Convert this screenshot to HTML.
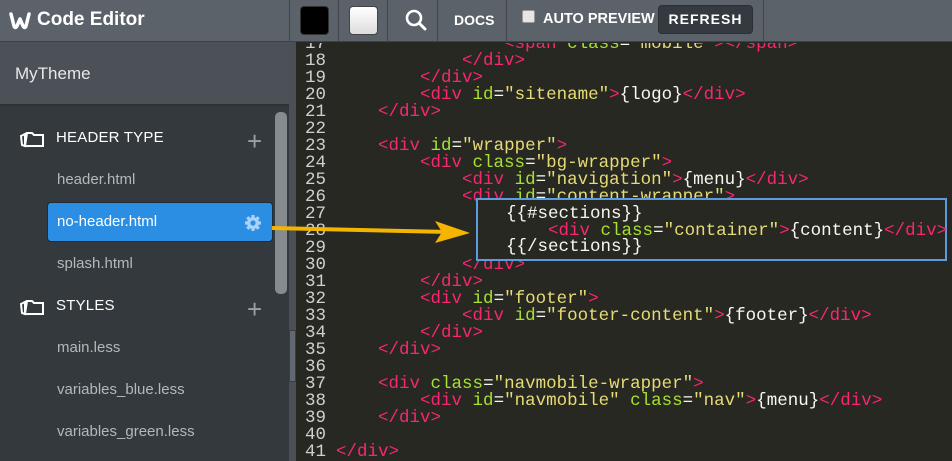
<!DOCTYPE html>
<html><head><meta charset="utf-8"><style>
*{margin:0;padding:0;box-sizing:border-box}
body{width:952px;height:461px;overflow:hidden;position:relative;background:#272822;font-family:"Liberation Sans",sans-serif}
.a{position:absolute}
#top{left:0;top:0;width:952px;height:42px;background:#5b6269;border-bottom:1px solid #3c4247}
.sep{position:absolute;top:0;width:1px;height:42px;background:#40464b}
#side{left:0;top:42px;width:290px;height:419px;background:#33393d}
#theme{left:0;top:42px;width:290px;height:64px;background:#4b5157;border-bottom:2px solid #2c3135;color:#e6e8ea;font-size:17px;padding:22px 0 0 15px}
.sec{position:absolute;left:56px;color:#fff;font-size:15px;letter-spacing:0.2px}
.itm{position:absolute;left:57px;color:#b4b8bb;font-size:15px}
.plus{position:absolute;left:247px;color:#9aa0a4;font-size:26px;font-weight:300;line-height:1}
pre{font-family:"Liberation Mono",monospace;font-size:17.5px;line-height:17px;color:#f8f8f2;position:absolute}
.t{color:#f92672}.g{color:#a6e22e}.s{color:#e6db74}
.ln{color:#d0d0d0}
</style></head><body>
<div class="a" id="top"></div>
<svg class="a" style="left:8px;top:11px" width="24" height="20" viewBox="0 0 24 20"><path d="M3 3 L6 15 Q7 18 9 15 L12 8 L15 15 Q17 18 18 15 L21 3" fill="none" stroke="#fff" stroke-width="3.5" stroke-linejoin="round" stroke-linecap="round"/></svg>
<div class="a" style="left:37px;top:9px;color:#fff;font-size:19px;font-weight:bold">Code Editor</div>
<div class="sep" style="left:289px"></div>
<div class="a" style="left:300px;top:6px;width:29px;height:29px;background:#000;border-radius:4px;border:1px solid #333"></div>
<div class="sep" style="left:338px"></div>
<div class="a" style="left:349px;top:6px;width:29px;height:29px;background:linear-gradient(#fff,#ddd);border-radius:4px;border:1px solid #444"></div>
<div class="sep" style="left:387px"></div>
<svg class="a" style="left:404px;top:8px" width="24" height="24" viewBox="0 0 24 24"><circle cx="10" cy="10" r="7" fill="none" stroke="#fff" stroke-width="2.6"/><path d="M15 15 L21 21" stroke="#fff" stroke-width="3" stroke-linecap="round"/></svg>
<div class="sep" style="left:437px"></div>
<div class="a" style="left:454px;top:12px;color:#fff;font-size:14px;font-weight:bold">DOCS</div>
<div class="sep" style="left:506px"></div>
<div class="a" style="left:522px;top:10px;width:13px;height:13px;background:#e6e6e6;border-radius:2px;border:1px solid #999"></div>
<div class="a" style="left:543px;top:11px;color:#fff;font-size:14.5px;font-weight:bold">AUTO PREVIEW</div>
<div class="a" style="left:658px;top:5px;width:95px;height:29px;background:#343a3f;border-radius:4px;border:1px solid #2a2f33;color:#fff;font-size:14px;font-weight:bold;letter-spacing:1px;text-align:center;line-height:27px">REFRESH</div>
<div class="sep" style="left:763px"></div>

<div class="a" id="side"></div>
<div class="a" id="theme">MyTheme</div>
<svg class="a" style="left:19px;top:130px" width="26" height="18" viewBox="0 0 26 18"><path d="M8 3 H13 L15 5 H24 V16 H6 Z M2 6 L6 4 V16 L3 15 Z" fill="none" stroke="#fff" stroke-width="2"/></svg>
<div class="sec" style="top:129px">HEADER TYPE</div>
<div class="plus" style="top:128px">+</div>
<div class="itm" style="top:171px">header.html</div>
<div class="a" style="left:47px;top:202px;width:226px;height:40px;background:#2b8ee3;border-radius:4px;border:1px solid #1f2d38"></div>
<div class="itm" style="top:213px;color:#fff">no-header.html</div>
<svg class="a" style="left:244px;top:214px" width="18" height="18" viewBox="0 0 18 18"><g fill="#a8d2f7"><circle cx="9" cy="9" r="6"/><g stroke="#a8d2f7" stroke-width="3.2"><path d="M9 1V17M1 9H17M3.3 3.3L14.7 14.7M14.7 3.3L3.3 14.7"/></g></g><circle cx="9" cy="9" r="2.6" fill="#2b8ee3"/></svg>
<div class="itm" style="top:255px">splash.html</div>
<svg class="a" style="left:19px;top:298px" width="26" height="18" viewBox="0 0 26 18"><path d="M8 3 H13 L15 5 H24 V16 H6 Z M2 6 L6 4 V16 L3 15 Z" fill="none" stroke="#fff" stroke-width="2"/></svg>
<div class="sec" style="top:297px">STYLES</div>
<div class="plus" style="top:296px">+</div>
<div class="itm" style="top:339px">main.less</div>
<div class="itm" style="top:381px">variables_blue.less</div>
<div class="itm" style="top:423px">variables_green.less</div>
<div class="a" style="left:275px;top:112px;width:12px;height:182px;background:#868b8f;border-radius:5px"></div>
<div class="a" style="left:289px;top:42px;width:7px;height:419px;background:#4a5056"></div>
<div class="a" style="left:289px;top:330px;width:7px;height:52px;background:#626970;border:1px solid #3a3f44"></div>

<div class="a" style="left:296px;top:43px;width:656px;height:418px;overflow:hidden">
<pre style="left:9px;top:-7px" class="ln">17
18
19
20
21
22
23
24
25
26
27
28
29
30
31
32
33
34
35
36
37
38
39
40
41</pre>
<pre style="left:40px;top:-7px">                <span class="t">&lt;span</span> <span class="g">class</span>=<span class="s">"mobile"</span><span class="t">&gt;&lt;/span&gt;</span>
            <span class="t">&lt;/div&gt;</span>
        <span class="t">&lt;/div&gt;</span>
        <span class="t">&lt;div</span> <span class="g">id</span>=<span class="s">"sitename"</span><span class="t">&gt;</span>{logo}<span class="t">&lt;/div&gt;</span>
    <span class="t">&lt;/div&gt;</span>

    <span class="t">&lt;div</span> <span class="g">id</span>=<span class="s">"wrapper"</span><span class="t">&gt;</span>
        <span class="t">&lt;div</span> <span class="g">class</span>=<span class="s">"bg-wrapper"</span><span class="t">&gt;</span>
            <span class="t">&lt;div</span> <span class="g">id</span>=<span class="s">"navigation"</span><span class="t">&gt;</span>{menu}<span class="t">&lt;/div&gt;</span>
            <span class="t">&lt;div</span> <span class="g">id</span>=<span class="s">"content-wrapper"</span><span class="t">&gt;</span>



            <span class="t">&lt;/div&gt;</span>
        <span class="t">&lt;/div&gt;</span>
        <span class="t">&lt;div</span> <span class="g">id</span>=<span class="s">"footer"</span><span class="t">&gt;</span>
            <span class="t">&lt;div</span> <span class="g">id</span>=<span class="s">"footer-content"</span><span class="t">&gt;</span>{footer}<span class="t">&lt;/div&gt;</span>
        <span class="t">&lt;/div&gt;</span>
    <span class="t">&lt;/div&gt;</span>

    <span class="t">&lt;div</span> <span class="g">class</span>=<span class="s">"navmobile-wrapper"</span><span class="t">&gt;</span>
        <span class="t">&lt;div</span> <span class="g">id</span>=<span class="s">"navmobile"</span> <span class="g">class</span>=<span class="s">"nav"</span><span class="t">&gt;</span>{menu}<span class="t">&lt;/div&gt;</span>
    <span class="t">&lt;/div&gt;</span>

<span class="t">&lt;/div&gt;</span></pre>
</div>

<div class="a" style="left:476px;top:198px;width:471px;height:63px;background:#272822;border:2.5px solid #5b9be0"></div>
<pre style="left:506px;top:206px;line-height:16.5px">{{#sections}}
    <span class="t">&lt;div</span> <span class="g">class</span>=<span class="s">"container"</span><span class="t">&gt;</span>{content}<span class="t">&lt;/div&gt;</span>
{{/sections}}</pre>

<svg class="a" style="left:270px;top:215px" width="205" height="30" viewBox="0 0 205 30"><path d="M2 13 L180 17" stroke="#f4b400" stroke-width="4"/><path d="M165 6 L200 18 L165 28 L172 17 Z" fill="#f4b400"/></svg>
</body></html>
